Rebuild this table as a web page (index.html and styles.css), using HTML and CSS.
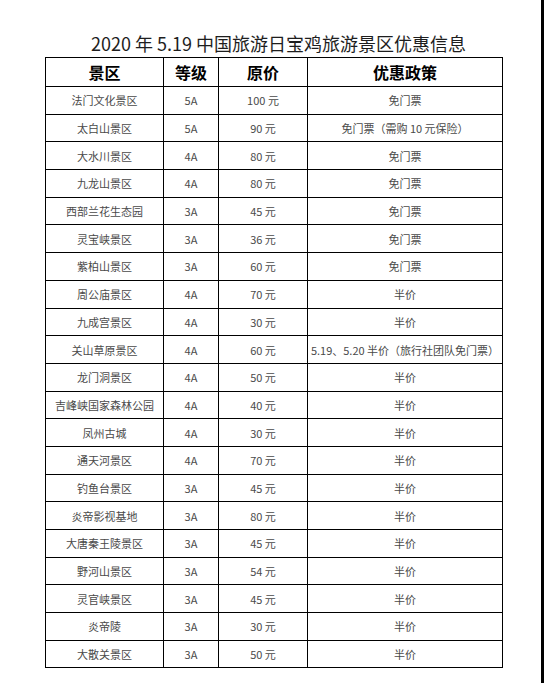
FILE: index.html
```html
<!DOCTYPE html>
<html lang="zh">
<head>
<meta charset="utf-8">
<title>2020 年 5.19 中国旅游日宝鸡旅游景区优惠信息</title>
<link rel="stylesheet" href="styles.css">
</head>
<body>
<div class="page">
  <h1 class="title">2020 年 5.19 中国旅游日宝鸡旅游景区优惠信息</h1>
  <table class="sheet">
    <colgroup>
      <col class="c-name">
      <col class="c-level">
      <col class="c-price">
      <col class="c-policy">
    </colgroup>
    <thead>
      <tr><th>景区</th><th>等级</th><th>原价</th><th>优惠政策</th></tr>
    </thead>
    <tbody>
      <tr><td>法门文化景区</td><td>5A</td><td>100 元</td><td>免门票</td></tr>
      <tr><td>太白山景区</td><td>5A</td><td>90 元</td><td>免门票（需购 10 元保险）</td></tr>
      <tr><td>大水川景区</td><td>4A</td><td>80 元</td><td>免门票</td></tr>
      <tr><td>九龙山景区</td><td>4A</td><td>80 元</td><td>免门票</td></tr>
      <tr><td>西部兰花生态园</td><td>3A</td><td>45 元</td><td>免门票</td></tr>
      <tr><td>灵宝峡景区</td><td>3A</td><td>36 元</td><td>免门票</td></tr>
      <tr><td>紫柏山景区</td><td>3A</td><td>60 元</td><td>免门票</td></tr>
      <tr><td>周公庙景区</td><td>4A</td><td>70 元</td><td>半价</td></tr>
      <tr><td>九成宫景区</td><td>4A</td><td>30 元</td><td>半价</td></tr>
      <tr><td>关山草原景区</td><td>4A</td><td>60 元</td><td>5.19、5.20 半价（旅行社团队免门票）</td></tr>
      <tr><td>龙门洞景区</td><td>4A</td><td>50 元</td><td>半价</td></tr>
      <tr><td>吉峰峡国家森林公园</td><td>4A</td><td>40 元</td><td>半价</td></tr>
      <tr><td>凤州古城</td><td>4A</td><td>30 元</td><td>半价</td></tr>
      <tr><td>通天河景区</td><td>4A</td><td>70 元</td><td>半价</td></tr>
      <tr><td>钓鱼台景区</td><td>3A</td><td>45 元</td><td>半价</td></tr>
      <tr><td>炎帝影视基地</td><td>3A</td><td>80 元</td><td>半价</td></tr>
      <tr><td>大唐秦王陵景区</td><td>3A</td><td>45 元</td><td>半价</td></tr>
      <tr><td>野河山景区</td><td>3A</td><td>54 元</td><td>半价</td></tr>
      <tr><td>灵官峡景区</td><td>3A</td><td>45 元</td><td>半价</td></tr>
      <tr><td>炎帝陵</td><td>3A</td><td>30 元</td><td>半价</td></tr>
      <tr><td>大散关景区</td><td>3A</td><td>50 元</td><td>半价</td></tr>
    </tbody>
  </table>
</div>
</body>
</html>
```

FILE: styles.css
```css
html, body {
  margin: 0;
  padding: 0;
  background: #ffffff;
}

.page {
  box-sizing: border-box;
  width: 544px;
  height: 683px;
  padding-top: 31px;
  border-right: 3px solid #000000;
  overflow: hidden;
  font-family: "Noto Sans CJK SC", "Noto Sans", sans-serif;
}

.title {
  margin: 0 0 2px 0;
  padding-left: 16px;
  font-size: 18px;
  line-height: 24px;
  font-weight: 400;
  color: #1e1e1e;
  text-align: center;
  white-space: nowrap;
}

.sheet {
  margin-left: 45px;
  width: 457px;
  table-layout: fixed;
  border-collapse: collapse;
}

.c-name { width: 118px; }
.c-level { width: 55px; }
.c-price { width: 89px; }
.c-policy { width: 195px; }

.sheet th,
.sheet td {
  border: 1px solid #000000;
  padding: 0;
  text-align: center;
  vertical-align: middle;
  white-space: nowrap;
}

.sheet th {
  height: 28px;
  font-size: 16px;
  font-weight: 700;
  color: #000000;
  line-height: 20px;
}

.sheet td {
  height: 26.7px;
  font-size: 11px;
  line-height: 14px;
  color: #4a4a4a;
}
```
